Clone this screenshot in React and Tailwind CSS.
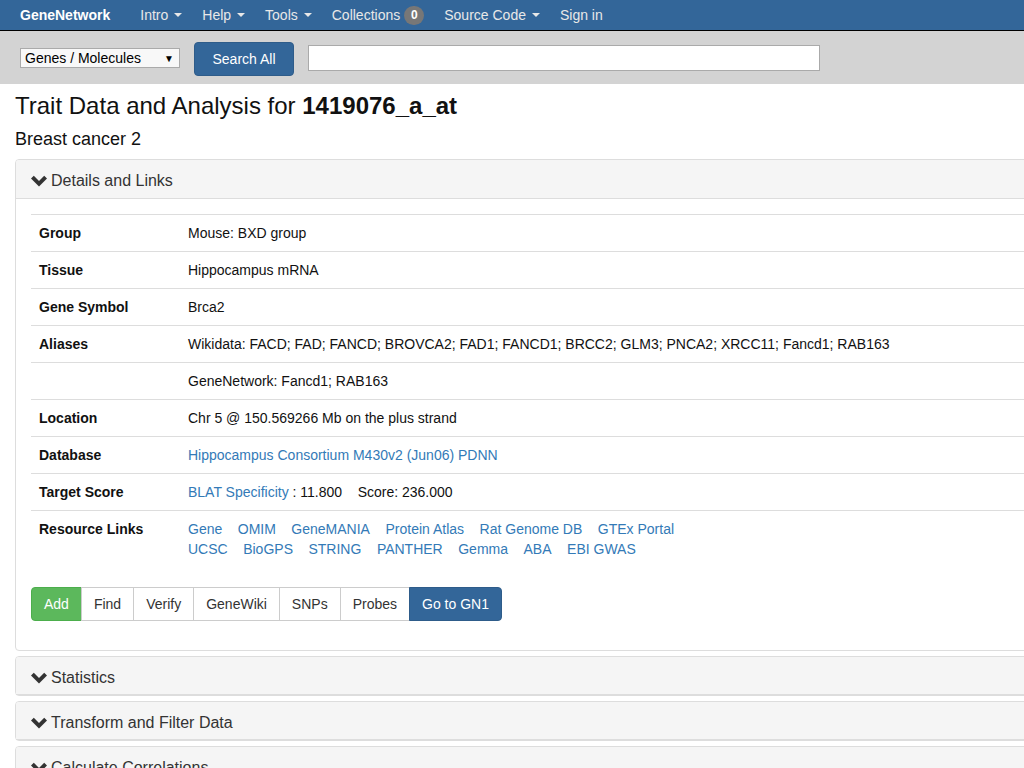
import React from "react";

function Caret() {
  return <span className="inline-block ml-[6px] w-0 h-0 border-l-[4px] border-r-[4px] border-t-[4px] border-l-transparent border-r-transparent border-t-[#e8e8e8] align-middle" />;
}

function Chevron() {
  return (
    <svg width="16" height="12" viewBox="0 0 16 12" className="inline-block mr-[4px] align-[-1px]">
      <polygon points="0,3.5 2.8,0.7 8,5.9 13.2,0.7 16,3.5 8,11.5" fill="#333" />
    </svg>
  );
}

function PanelHeader({ title, collapsed }) {
  return (
    <div className={`bg-[#f5f5f5] border-b border-[#ddd] rounded-t-[3px] px-[15px] pt-[12px] ${collapsed ? "pb-[7px]" : "pb-[8px]"} text-[16px] leading-[18px] text-[#333]`}>
      <Chevron />
      {title}
    </div>
  );
}

const L = ({ children }) => <a className="text-[#337ab7] cursor-pointer">{children}</a>;

function Row({ label, children }) {
  return (
    <tr className="border-t border-[#ddd]">
      <td className="w-[149px] p-[8px] font-bold align-top text-[#111]">{label}</td>
      <td className="p-[8px] align-top text-[#111]">{children}</td>
    </tr>
  );
}

export default function App() {
  const links1 = ["Gene", "OMIM", "GeneMANIA", "Protein Atlas", "Rat Genome DB", "GTEx Portal"];
  const links2 = ["UCSC", "BioGPS", "STRING", "PANTHER", "Gemma", "ABA", "EBI GWAS"];
  const btn = "h-[34px] px-[12px] border text-[14px] leading-[20px] flex items-center";
  return (
    <div className="w-[1024px] h-[768px] overflow-hidden bg-white font-['Liberation_Sans',Arial,sans-serif] text-[14px] text-[#333]">
      <nav className="h-[31px] bg-[#336699] border-b border-black flex items-center text-[14px] text-[#e8e8e8]">
        <span className="ml-[20px] font-bold text-white">GeneNetwork</span>
        <div className="flex items-center ml-[20px]">
          <span className="px-[10px] flex items-center">Intro<Caret /></span>
          <span className="px-[10px] flex items-center">Help<Caret /></span>
          <span className="px-[10px] flex items-center">Tools<Caret /></span>
          <span className="px-[10px] flex items-center">
            Collections
            <span className="ml-[4px] h-[19px] min-w-[20px] px-[6px] rounded-full bg-[#777] text-white font-bold text-[12px] flex items-center justify-center">0</span>
          </span>
          <span className="px-[10px] flex items-center">Source Code<Caret /></span>
          <span className="px-[10px] flex items-center">Sign in</span>
        </div>
      </nav>
      <div className="h-[53px] bg-[#d3d3d3] flex items-start">
        <div className="ml-[20px] mt-[17px] w-[160px] h-[20px] bg-[#f8f8f8] border border-[#aaa] flex items-center justify-between pl-[4px] pr-[5px] text-[14px] text-black">
          <span>Genes / Molecules</span>
          <span className="text-[10px]">▼</span>
        </div>
        <div className="ml-[14px] mt-[11px] w-[100px] h-[34px] rounded-[4px] bg-[#336699] border border-[#2e5c8a] text-white flex items-center justify-center text-[14px] pt-[1px]">Search All</div>
        <div className="ml-[14px] mt-[14px] w-[512px] h-[26px] bg-white border border-[#aaa]" />
      </div>
      <div className="px-[15px] w-[1200px]">
        <h3 className="mt-[9px] text-[24px] leading-[26px] text-[#111]">
          Trait Data and Analysis for <b>1419076_a_at</b>
        </h3>
        <div className="mt-[10px] text-[18px] leading-[20px] text-[#111]">Breast cancer 2</div>
        <div className="mt-[10px] border border-[#ddd] rounded-[4px]">
          <PanelHeader title="Details and Links" />
          <div className="p-[15px] pb-[29px]">
            <table className="w-full border-collapse text-[14px] leading-[20px]">
              <tbody>
                <Row label="Group">Mouse: BXD group</Row>
                <Row label="Tissue">Hippocampus mRNA</Row>
                <Row label="Gene Symbol">Brca2</Row>
                <Row label="Aliases">Wikidata: FACD; FAD; FANCD; BROVCA2; FAD1; FANCD1; BRCC2; GLM3; PNCA2; XRCC11; Fancd1; RAB163</Row>
                <Row label="">GeneNetwork: Fancd1; RAB163</Row>
                <Row label="Location">Chr 5 @ 150.569266 Mb on the plus strand</Row>
                <Row label="Database"><L>Hippocampus Consortium M430v2 (Jun06) PDNN</L></Row>
                <Row label="Target Score">
                  <L>BLAT Specificity</L> : 11.800&nbsp;&nbsp;&nbsp;&nbsp;Score: 236.000
                </Row>
                <Row label="Resource Links">
                  <div className="flex gap-x-[15.5px]">{links1.map((l) => <L key={l}>{l}</L>)}</div>
                  <div className="flex gap-x-[15.5px]">{links2.map((l) => <L key={l}>{l}</L>)}</div>
                </Row>
              </tbody>
            </table>
            <div className="mt-[20px] flex">
              <div className={`${btn} bg-[#5cb85c] border-[#4cae4c] text-white rounded-l-[4px]`}>Add</div>
              <div className={`${btn} bg-white border-[#ccc] -ml-px text-[#333]`}>Find</div>
              <div className={`${btn} bg-white border-[#ccc] -ml-px text-[#333]`}>Verify</div>
              <div className={`${btn} bg-white border-[#ccc] -ml-px text-[#333]`}>GeneWiki</div>
              <div className={`${btn} bg-white border-[#ccc] -ml-px text-[#333]`}>SNPs</div>
              <div className={`${btn} bg-white border-[#ccc] -ml-px text-[#333]`}>Probes</div>
              <div className={`${btn} bg-[#336699] border-[#2e5c8a] -ml-px text-white rounded-r-[4px]`}>Go to GN1</div>
            </div>
          </div>
        </div>
        {["Statistics", "Transform and Filter Data", "Calculate Correlations"].map((t) => (
          <div key={t} className="mt-[5px] border border-[#ddd] rounded-[4px]">
            <PanelHeader title={t} collapsed />
          </div>
        ))}
      </div>
    </div>
  );
}
